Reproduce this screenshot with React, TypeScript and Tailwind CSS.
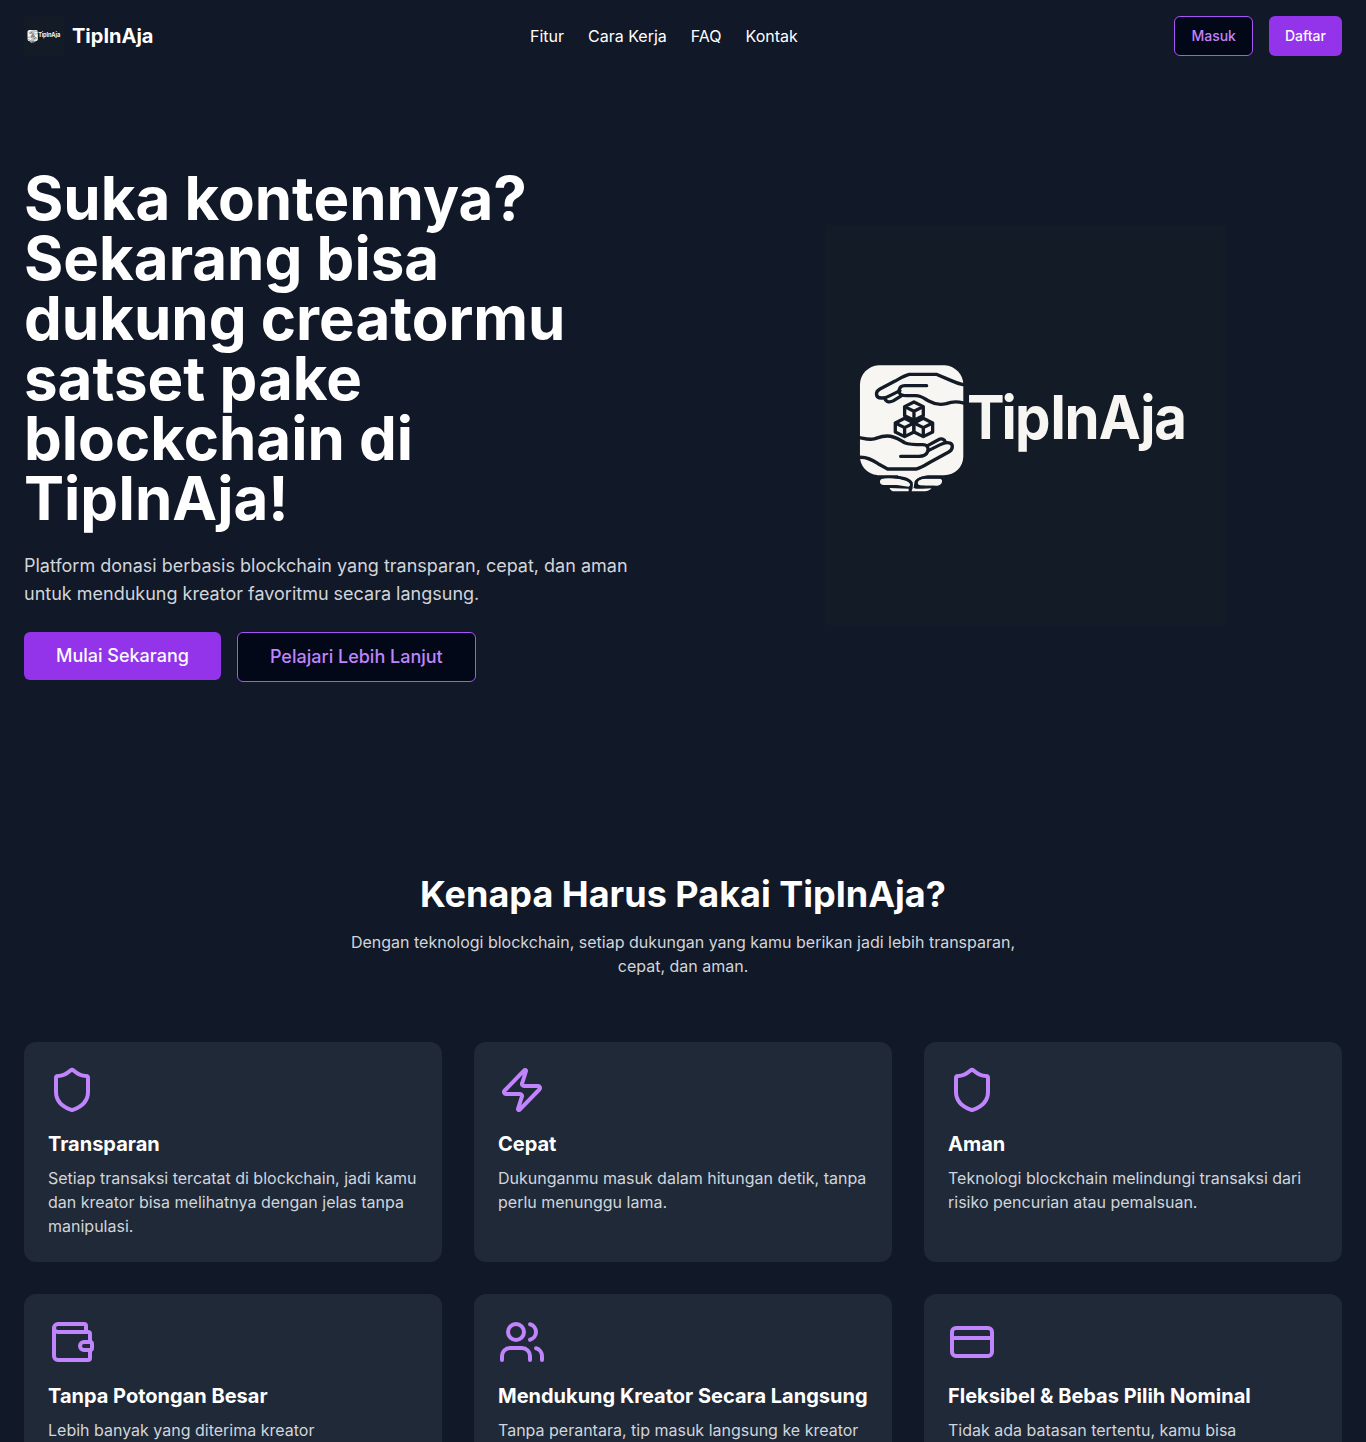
import { CreditCard, Shield, Users, Wallet, Zap } from "lucide-react";
import type { LucideIcon } from "lucide-react";

function Cube({ x, y }: { x: number; y: number }) {
  return (
    <g transform={`translate(${x} ${y})`}>
      <path d="M0 -28 L28 -14 V13 L0 27 L-28 13 V-14 Z" />
      <path d="M-28 -14 L0 0 L28 -14 M0 0 V27" />
    </g>
  );
}

function BrandImage({ className }: { className: string }) {
  return (
    <svg viewBox="0 0 400 400" className={className} role="img" aria-label="TipInAja">
      <rect width="400" height="400" fill="#131b26" />
      <g transform="translate(20.3 125.3) scale(0.33333)">
        <path
          d="M100 45 H298 C329 47 354 72 354 103 V318 C354 350 329 375 296 375 H103 C70 375 44 350 44 318 V103 C44 72 69 47 100 45 Z"
          fill="#f8f6f2"
        />
        <path d="M158 373 H252 C230 377 213 383 208 393 L205 412 H201 L202 396 C197 385 181 379 158 376 Z" fill="#f8f6f2" />
        <g fill="none" stroke="#131b26" strokeWidth="10" strokeLinecap="round" strokeLinejoin="round">
          <path d="M353 103 C339 100 329 96 318 91 L273 72 H192 C176 76 163 85 148 93 L104 116 C89 124 90 143 108 143 C117 144 125 141 134 136 L164 121" />
          <path d="M244 106 H179 C165 106 159 116 162 127 C164 135 173 136 184 136 H212 C228 136 237 145 252 153 C268 162 284 165 303 160 C319 154 332 152 353 158" />
          <path d="M119 146 C123 156 134 157 145 151 L169 136" />
          <path d="M43 262 C58 265 72 269 86 266 C101 261 108 257 126 257 C151 257 164 270 180 278 C192 283 208 283 232 283 C246 283 251 292 247 304 C243 315 233 318 221 318 H166" />
          <path d="M43 321 C70 319 87 333 101 342 L127 356 H214 C231 351 246 340 261 332 L309 306 C324 298 325 281 312 278 C303 274 293 279 285 283 L249 301" />
          <path d="M247 286 L278 269 C288 263 298 266 300 275" />
        </g>
        <g fill="#f8f6f2" stroke="#131b26" strokeWidth="10" strokeLinejoin="round">
          <Cube x={206} y={183} />
          <Cube x={178} y={232} />
          <Cube x={234} y={232} />
        </g>
        <g fill="#f8f6f2">
          <path d="M111 385 C142 382 177 387 190 396 C196 401 196 406 190 409 L155 404 H116 C101 404 101 387 111 385 Z" />
          <path d="M284 385 H240 C223 386 216 392 217 399 C218 406 225 406 240 406 H276 C291 405 295 386 284 385 Z" />
          <path d="M133 413 L190 415 V423 H148 C140 423 135 420 133 413 Z" />
          <path d="M204 412 C213 417 229 416 259 413 C253 421 243 423 232 423 H199 C200 418 201 414 204 412 Z" />
        </g>
        <g fill="none" stroke="#131b26" strokeWidth="7" strokeLinecap="round">
          <path d="M103 381 C145 377 185 383 196 396 C201 402 199 409 196 414" />
          <path d="M288 381 H240 C220 382 212 391 213 400 C214 408 223 410 237 410 H268" />
        </g>
      </g>
      <text
        transform="scale(0.94 1)"
        x="151 187.7 202.1 239.6 254.9 291.2 335.4 350.4"
        y="213.7"
        fill="#f8f6f2"
        fontFamily="Inter, sans-serif"
        fontSize="60"
        fontWeight="700"
      >
        TipInAja
      </text>
    </svg>
  );
}

const navigation = ["Fitur", "Cara Kerja", "FAQ", "Kontak"];

const features: { icon: LucideIcon; title: string; text: string }[] = [
  {
    icon: Shield,
    title: "Transparan",
    text: "Setiap transaksi tercatat di blockchain, jadi kamu dan kreator bisa melihatnya dengan jelas tanpa manipulasi.",
  },
  { icon: Zap, title: "Cepat", text: "Dukunganmu masuk dalam hitungan detik, tanpa perlu menunggu lama." },
  { icon: Shield, title: "Aman", text: "Teknologi blockchain melindungi transaksi dari risiko pencurian atau pemalsuan." },
  { icon: Wallet, title: "Tanpa Potongan Besar", text: "Lebih banyak yang diterima kreator" },
  { icon: Users, title: "Mendukung Kreator Secara Langsung", text: "Tanpa perantara, tip masuk langsung ke kreator" },
  { icon: CreditCard, title: "Fleksibel & Bebas Pilih Nominal", text: "Tidak ada batasan tertentu, kamu bisa" },
];

export default function App() {
  return (
    <div className="h-[1442px] overflow-hidden bg-[#111827] font-['Inter',sans-serif] text-white">
      <header className="flex items-center justify-between px-6 py-4">
        <a href="#" className="flex items-center gap-2">
          <BrandImage className="size-10" />
          <span className="text-xl font-bold">TipInAja</span>
        </a>
        <nav className="flex gap-6">
          {navigation.map((item) => (
            <a key={item} href="#">
              {item}
            </a>
          ))}
        </nav>
        <div className="flex gap-4">
          <button className="h-10 rounded-md border border-[#a855f7] bg-[#020817] px-4 text-sm font-medium text-[#c084fc]">
            Masuk
          </button>
          <button className="h-10 rounded-md bg-[#9333ea] px-4 text-sm font-medium text-[#f8fafc]">Daftar</button>
        </div>
      </header>

      <section className="grid grid-cols-2 items-center gap-12 px-6 py-24">
        <div>
          <h1 className="mb-6 text-6xl leading-none font-bold">
            Suka kontennya? Sekarang bisa dukung creatormu satset pake blockchain di TipInAja!
          </h1>
          <p className="mb-6 text-lg leading-7 text-[#d1d5db]">
            Platform donasi berbasis blockchain yang transparan, cepat, dan aman untuk mendukung kreator favoritmu secara
            langsung.
          </p>
          <div className="flex items-start gap-4">
            <button className="h-12 rounded-md bg-[#9333ea] px-8 text-lg font-medium text-[#f8fafc]">
              Mulai Sekarang
            </button>
            <button className="h-[50px] rounded-md border border-[#a855f7] bg-[#020817] px-8 text-lg font-medium text-[#c084fc]">
              Pelajari Lebih Lanjut
            </button>
          </div>
        </div>
        <div className="flex justify-center">
          <BrandImage className="size-[400px]" />
        </div>
      </section>

      <section className="px-6 py-24">
        <div className="mx-auto mb-16 max-w-2xl text-center">
          <h2 className="mb-4 text-4xl leading-10 font-bold whitespace-nowrap">Kenapa Harus Pakai TipInAja?</h2>
          <p className="text-[#d1d5db]">
            Dengan teknologi blockchain, setiap dukungan yang kamu berikan jadi lebih transparan, cepat, dan aman.
          </p>
        </div>
        <div className="grid grid-cols-3 gap-8">
          {features.map(({ icon: Icon, title, text }) => (
            <article key={title} className="min-h-[220px] rounded-xl bg-[#1f2937] p-6">
              <Icon className="mb-4 size-12 text-[#c084fc]" />
              <h3 className="mb-2 text-xl font-bold whitespace-nowrap">{title}</h3>
              <p className="text-[#d1d5db]">{text}</p>
            </article>
          ))}
        </div>
      </section>
    </div>
  );
}
